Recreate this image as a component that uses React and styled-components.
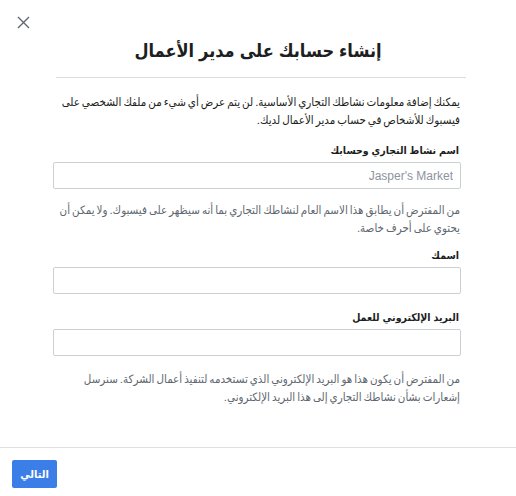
import React from "react";
import styled, { createGlobalStyle } from "styled-components";

const FONT = `"Liberation Sans", "DejaVu Sans Condensed", "DejaVu Sans", Arial, sans-serif`;

const Global = createGlobalStyle`
  html, body { margin: 0; padding: 0; background: #fff; }
  body { font-family: ${FONT}; color: #1c1e21; }
  * { box-sizing: border-box; }
`;

const Modal = styled.div`
  width: 516px;
  height: 496px;
  display: flex;
  flex-direction: column;
  background: #fff;
`;

const Header = styled.div`
  display: grid;
  grid-template-columns: 1fr auto 1fr;
  padding: 14px 0 0 0;
`;

const CloseButton = styled.button`
  justify-self: start;
  align-self: start;
  margin-left: 15px;
  width: 16px;
  height: 16px;
  padding: 0;
  border: 0;
  background: transparent;
  display: flex;
  align-items: center;
  justify-content: center;
  cursor: pointer;
`;

const Title = styled.h1`
  grid-column: 2;
  margin: 25px 0 0 0;
  font-size: 18px;
  line-height: 24px;
  font-weight: bold;
  color: #1c1e21;
  direction: rtl;
  text-align: center;
`;

const Divider = styled.hr`
  margin: 14px 50px 0 56px;
  border: 0;
  border-top: 1px solid #dadde1;
  height: 0;
`;

const Body = styled.div`
  flex: 1;
  direction: rtl;
  padding: 15px 55px 0 53px;
`;

const Paragraph = styled.p`
  margin: 0;
  font-size: 11.5px;
  line-height: 18px;
  word-spacing: -1.2px;
  color: ${(p) => (p.$muted ? "#606770" : "#1c1e21")};
  padding-right: 1px;
`;

const Field = styled.div`
  margin-top: ${(p) => p.$top}px;
  display: flex;
  flex-direction: column;
`;

const Label = styled.label`
  font-size: 10.5px;
  font-weight: bold;
  line-height: 16px;
  color: #1c1e21;
  padding-right: 2px;
  margin-bottom: 4px;
`;

const Input = styled.input`
  width: 100%;
  height: 27px;
  border: 1px solid #ccd0d5;
  border-radius: 2px;
  padding: 0 7px;
  font-family: ${FONT};
  font-size: 12px;
  color: #1c1e21;
  direction: rtl;
  text-align: right;
  outline: none;
  &::placeholder { color: #8d949e; }
`;

const Help = styled(Paragraph)`
  margin-top: ${(p) => p.$top}px;
`;

const Footer = styled.div`
  border-top: 1px solid #dddfe2;
  padding: 12px 12px 8px 12px;
  display: flex;
`;

const PrimaryButton = styled.button`
  width: 45px;
  height: 28px;
  border: 0;
  border-radius: 2px;
  background: #3b7ee8;
  color: #fff;
  font-family: ${FONT};
  font-size: 11px;
  font-weight: bold;
  padding: 0;
  cursor: pointer;
`;

const CloseIcon = () => (
  <svg width="13" height="13" viewBox="0 0 13 13">
    <path d="M1 1 L12 12 M12 1 L1 12" stroke="#606770" strokeWidth="1.4" fill="none" />
  </svg>
);

export default function App() {
  return (
    <>
      <Global />
      <Modal>
        <Header>
          <CloseButton aria-label="close"><CloseIcon /></CloseButton>
          <Title>إنشاء حسابك على مدير الأعمال</Title>
        </Header>
        <Divider />
        <Body>
          <Paragraph>
            يمكنك إضافة معلومات نشاطك التجاري الأساسية. لن يتم عرض أي شيء من ملفك الشخصي على فيسبوك للأشخاص في حساب مدير الأعمال لديك.
          </Paragraph>
          <Field $top={13}>
            <Label>اسم نشاط التجاري وحسابك</Label>
            <Input placeholder="Jasper's Market" />
          </Field>
          <Help $muted $top={12}>
            من المفترض أن يطابق هذا الاسم العام لنشاطك التجاري بما أنه سيظهر على فيسبوك. ولا يمكن أن يحتوي على أحرف خاصة.
          </Help>
          <Field $top={10}>
            <Label>اسمك</Label>
            <Input />
          </Field>
          <Field $top={15}>
            <Label>البريد الإلكتروني للعمل</Label>
            <Input />
          </Field>
          <Help $muted $top={14}>
            من المفترض أن يكون هذا هو البريد الإلكتروني الذي تستخدمه لتنفيذ أعمال الشركة. سنرسل إشعارات بشأن نشاطك التجاري إلى هذا البريد الإلكتروني.
          </Help>
        </Body>
        <Footer>
          <PrimaryButton>التالي</PrimaryButton>
        </Footer>
      </Modal>
    </>
  );
}
